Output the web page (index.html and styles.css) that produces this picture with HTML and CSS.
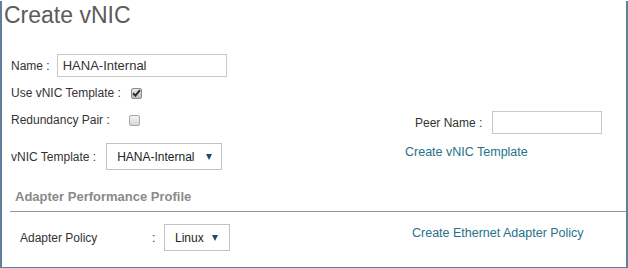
FILE: index.html
```html
<!DOCTYPE html>
<html lang="en">
<head>
    <meta charset="UTF-8">
    <title>Create vNIC</title>
    <link rel="stylesheet" href="styles.css">
</head>
<body>
    <div class="panel">
        <h1 class="title">Create vNIC</h1>

        <div class="form">
            <div class="row row-name">
                <label class="label">Name :</label>
                <input class="text name-input" type="text" value="HANA-Internal">
            </div>

            <div class="row row-template">
                <label class="label">Use vNIC Template :</label>
                <span class="check checked">
                    <svg width="9" height="8" viewBox="0 0 9 8"><path d="M1 4.2 L3.4 6.6 L8 1.2" fill="none" stroke="#2b2b2b" stroke-width="2"/></svg>
                </span>
            </div>

            <div class="row row-split row-pair">
                <div class="left left-pair">
                    <label class="label">Redundancy Pair :</label>
                    <span class="check"></span>
                </div>
                <div class="peer">
                    <label class="label">Peer Name :</label>
                    <input class="text peer-input" type="text">
                </div>
            </div>

            <div class="row row-split row-vnic">
                <div class="left">
                    <label class="label">vNIC Template :</label>
                    <div class="select select-template">HANA-Internal <span class="arrow"></span></div>
                </div>
                <a class="link" href="#">Create vNIC Template</a>
            </div>
        </div>

        <div class="section">
            <div class="section-title">Adapter Performance Profile</div>
            <div class="row row-split row-policy">
                <div class="left left-policy">
                    <label class="label policy-label">Adapter Policy</label>
                    <span class="colon">:</span>
                    <div class="select select-policy">Linux <span class="arrow"></span></div>
                </div>
                <a class="link" href="#">Create Ethernet Adapter Policy</a>
            </div>
        </div>
    </div>
</body>
</html>
```

FILE: styles.css
```css
/* Page */
body {
    margin: 0;
    font-family: 'Liberation Sans', Arial, sans-serif;
    font-size: 12px;
    color: #333;
    background-color: #fff;
}

/* Dialog frame */
.panel {
    width: 628px;
    height: 268px;
    box-sizing: border-box;
    border: 2px solid #5f7f9d;
    border-top: none;
}

.title {
    margin: 1px 0 0 2px;
    font-size: 23px;
    font-weight: normal;
    line-height: 28px;
    color: #5c5c5c;
}

/* Form rows */
.form {
    padding-left: 9px;
}

.row {
    display: flex;
    align-items: center;
}

.label {
    line-height: 16px;
    white-space: nowrap;
}

.row-name {
    margin-top: 25px;
    gap: 7px;
}

.row-template {
    margin-top: 8px;
    height: 16px;
    gap: 10px;
}

.row-split {
    align-items: flex-start;
}

.left {
    width: 394px;
    display: flex;
    align-items: center;
    gap: 10px;
}

.row-pair {
    margin-top: 10px;
}

.left-pair {
    margin-top: 1px;
    gap: 19px;
}

.row-vnic {
    margin-top: 9px;
}

/* Inputs */
.text {
    box-sizing: border-box;
    height: 23px;
    border: 1px solid #c8c8c8;
    padding: 0 5px;
    font-family: inherit;
    font-size: 13px;
    color: #333;
    outline: none;
}

.name-input {
    width: 170px;
}

.peer {
    display: flex;
    align-items: center;
    gap: 10px;
    padding-left: 10px;
}

.peer-input {
    width: 110px;
}

/* Checkboxes */
.check {
    width: 11px;
    height: 11px;
    box-sizing: border-box;
    border: 1px solid #a8a8a8;
    border-radius: 2px;
    background: linear-gradient(#f4f4f4, #d6d6d6);
    display: flex;
    align-items: center;
    justify-content: center;
}

.check.checked {
    border-color: #8c8c8c;
    background: linear-gradient(#e8e8e8, #bdbdbd);
}

/* Drop-downs */
.select {
    box-sizing: border-box;
    height: 27px;
    border: 1px solid #c2c2c2;
    padding: 0 9px 0 10px;
    display: flex;
    align-items: center;
    justify-content: space-between;
    color: #222;
    white-space: nowrap;
}

.select-template {
    width: 116px;
}

.select-policy {
    width: 66px;
    padding-right: 11px;
}

.arrow {
    width: 0;
    height: 0;
    border-left: 3px solid transparent;
    border-right: 3px solid transparent;
    border-top: 6px solid #1f4b6a;
}

.link {
    margin-top: 1px;
    line-height: 16px;
    font-size: 12.5px;
    color: #25728a;
    text-decoration: none;
}

/* Adapter profile */
.section {
    margin: 19px 0 0 8px;
}

.section-title {
    padding: 0 0 6px 5px;
    line-height: 16px;
    font-size: 13px;
    font-weight: bold;
    color: #8a8a8a;
    border-bottom: 1px solid #8d9aa6;
}

.row-policy {
    margin-top: 12px;
    padding-left: 10px;
}

.left-policy {
    width: 392px;
    gap: 0;
}

.policy-label {
    width: 132px;
}

.colon {
    width: 12px;
}
```
